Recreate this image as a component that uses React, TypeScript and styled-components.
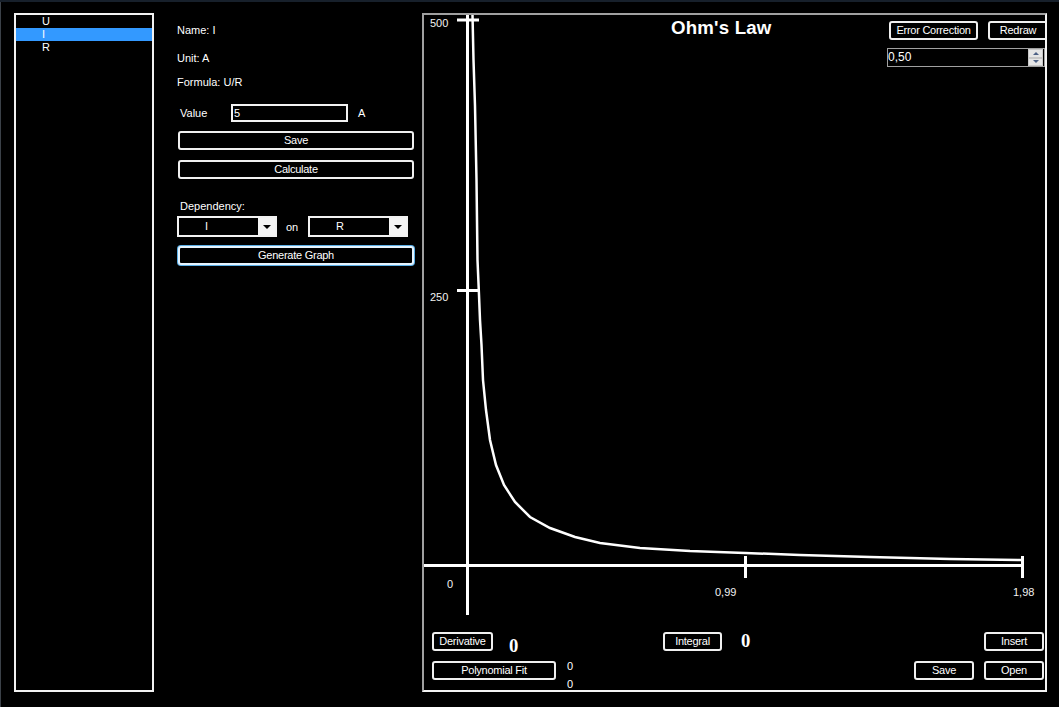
import React from "react";
import styled, { createGlobalStyle, css } from "styled-components";

const GlobalStyle = createGlobalStyle`
  html, body {
    margin: 0;
    padding: 0;
    background: #000;
  }
  body {
    font-family: "Liberation Sans", Arial, sans-serif;
  }
`;

const Window = styled.div`
  display: flex;
  align-items: flex-start;
  width: 1059px;
  height: 707px;
  background: #000;
  color: #fff;
  font-family: "Liberation Sans", Arial, sans-serif;
  font-size: 11px;
  overflow: hidden;
  box-shadow: inset 0 2px 0 #17202b, inset 1px 0 0 #3b4148;
`;

const ListBox = styled.ul`
  list-style: none;
  flex-shrink: 0;
  margin: 13px 0 0 14px;
  padding: 0;
  width: 140px;
  height: 679px;
  box-sizing: border-box;
  border: 2px solid #f2f2f2;
`;

const ListItem = styled.li<{ $selected?: boolean }>`
  height: 13px;
  line-height: 13px;
  padding-left: 26px;
  background: ${(p) => (p.$selected ? "#3399ff" : "transparent")};
`;

const Form = styled.div`
  display: flex;
  flex-direction: column;
  flex-shrink: 0;
  width: 237px;
  margin-left: 23px;
  padding-top: 23px;
`;

const InfoLabel = styled.div<{ $gap?: number }>`
  line-height: 14px;
  margin-top: ${(p) => p.$gap ?? 0}px;
`;

const ValueRow = styled.div`
  display: flex;
  align-items: center;
  height: 18px;
  margin-top: 15px;
  padding-left: 3px;
`;

const ValueLabel = styled.span`
  width: 51px;
`;

const TextInput = styled.div`
  width: 117px;
  height: 18px;
  box-sizing: border-box;
  border: 2px solid #f2f2f2;
  padding-left: 1px;
  line-height: 14px;
`;

const UnitLabel = styled.span`
  margin-left: 10px;
`;

const Button = styled.button<{ $w?: number; $focused?: boolean }>`
  flex-shrink: 0;
  width: ${(p) => (p.$w ? `${p.$w}px` : "100%")};
  height: 19px;
  box-sizing: border-box;
  padding: 0;
  background: #000;
  color: #fff;
  border: 2px solid #f0f0f0;
  border-radius: 3px;
  font-family: "Liberation Sans", Arial, sans-serif;
  font-size: 11px;
  letter-spacing: -0.25px;
  line-height: 15px;
  white-space: nowrap;
  ${(p) =>
    p.$focused &&
    css`
      border-color: #e6f4ff;
      box-shadow: 0 0 0 1px #5aaee6;
    `}
`;

const FormButton = styled(Button)<{ $gap: number }>`
  width: 236px;
  margin: ${(p) => p.$gap}px 0 0 1px;
`;

const DependencyLabel = styled.div`
  line-height: 14px;
  margin-top: 20px;
  padding-left: 3px;
`;

const ComboRow = styled.div`
  display: flex;
  align-items: center;
  margin-top: 3px;
`;

const Combo = styled.div`
  display: flex;
  width: 100px;
  height: 21px;
  box-sizing: border-box;
  border: 2px solid #f2f2f2;
  background: #000;
`;

const ComboText = styled.span`
  flex: 1;
  padding-left: 26px;
  line-height: 17px;
`;

const ComboArrow = styled.span`
  display: flex;
  align-items: center;
  justify-content: center;
  width: 17px;
  background: #f4f4f4;
  &::after {
    content: "";
    border-left: 4px solid transparent;
    border-right: 4px solid transparent;
    border-top: 4px solid #000;
  }
`;

const OnLabel = styled.span`
  width: 31px;
  padding-left: 9px;
  box-sizing: border-box;
`;

const GraphPanel = styled.div`
  position: relative;
  flex-shrink: 0;
  width: 625px;
  height: 679px;
  margin: 13px 0 0 8px;
  box-sizing: border-box;
  border: 2px solid;
  border-color: #a0a0a0 #f4f4f4 #f4f4f4 #a0a0a0;
  overflow: hidden;
`;

const Chart = styled.svg`
  position: absolute;
  inset: 0;
  width: 100%;
  height: 100%;
`;

const GraphLayer = styled.div`
  position: relative;
  display: flex;
  flex-direction: column;
  justify-content: space-between;
  height: 100%;
`;

const GraphHeader = styled.div`
  display: flex;
  align-items: flex-start;
`;

const Title = styled.h1`
  margin: 2px 0 0 247px;
  font-family: "Liberation Sans", Arial, sans-serif;
  font-size: 18.67px;
  font-weight: bold;
  line-height: 21px;
  letter-spacing: 0.2px;
`;

const HeaderTools = styled.div`
  display: flex;
  flex-direction: column;
  width: 158px;
  margin-left: auto;
  padding-top: 6px;
`;

const ToolRow = styled.div`
  display: flex;
  gap: 10px;
  padding-left: 2px;
`;

const Spinner = styled.div`
  display: flex;
  width: 158px;
  height: 19px;
  margin-top: 8px;
  box-sizing: border-box;
  border: 1px solid #a0a0a0;
`;

const SpinValue = styled.span`
  flex: 1;
  font-size: 12px;
  line-height: 17px;
`;

const SpinButtons = styled.div`
  display: flex;
  flex-direction: column;
  width: 15px;
  margin-right: 1px;
`;

const SpinHalf = styled.span<{ $down?: boolean }>`
  display: flex;
  flex: 1;
  align-items: center;
  justify-content: center;
  background: #e6e6e6;
  border: 1px solid #c8c8c8;
  &::after {
    content: "";
    border-left: 3px solid transparent;
    border-right: 3px solid transparent;
    ${(p) =>
      p.$down
        ? css`border-top: 3px solid #4d6185;`
        : css`border-bottom: 3px solid #4d6185;`}
  }
`;

const GraphFooter = styled.div`
  display: flex;
  flex-direction: column;
  gap: 10px;
  padding: 0 1px 10px 8px;
`;

const ResultRow = styled.div`
  display: grid;
  grid-template-columns: 61px 170px 59px 1fr 60px;
  height: 19px;
`;

const BigValue = styled.span<{ $left: number; $top: number }>`
  padding-left: ${(p) => p.$left}px;
  margin-top: ${(p) => p.$top}px;
  font-family: "Liberation Serif", "Times New Roman", serif;
  font-size: 18.67px;
  font-weight: bold;
  line-height: 19px;
`;

const FitRow = styled.div`
  display: flex;
  gap: 10px;
  height: 19px;
`;

const FitValues = styled.div`
  display: flex;
  flex-direction: column;
  margin: -4px auto 0 1px;
  line-height: 18px;
`;

const AxisText = styled.text`
  fill: #f2f2f2;
  font-family: "Liberation Sans", Arial, sans-serif;
  font-size: 11px;
`;

const curve: [number, number][] = [
  [472.5, 15],
  [473.5, 60],
  [475, 106],
  [476.5, 180],
  [477.5, 260],
  [479, 295],
  [480, 320],
  [481.5, 345],
  [483, 380],
  [486, 410],
  [490, 440],
  [496, 465],
  [504, 485],
  [515, 502],
  [530, 517],
  [550, 528],
  [575, 537],
  [600, 543],
  [640, 548],
  [690, 551],
  [745, 553],
  [800, 555],
  [870, 557],
  [950, 559],
  [1022, 560],
];

const OhmChart = () => (
  <Chart viewBox="424 15 621 675" preserveAspectRatio="none">
    <g stroke="#fff" strokeWidth={3} fill="none">
      <line x1={467.5} y1={15} x2={467.5} y2={615} />
      <line x1={424} y1={565.5} x2={1023} y2={565.5} />
      <line x1={457} y1={20} x2={479} y2={20} />
      <line x1={457} y1={290.5} x2={479} y2={290.5} />
      <line x1={745.5} y1={556} x2={745.5} y2={578} />
      <line x1={1022.5} y1={556} x2={1022.5} y2={578} />
      <polyline
        strokeWidth={2.5}
        points={curve.map(([x, y]) => `${x},${y}`).join(" ")}
      />
    </g>
    <AxisText x={430} y={27}>500</AxisText>
    <AxisText x={430} y={301}>250</AxisText>
    <AxisText x={447} y={588}>0</AxisText>
    <AxisText x={715} y={596}>0,99</AxisText>
    <AxisText x={1013} y={596}>1,98</AxisText>
  </Chart>
);

export default function App() {
  return (
    <>
      <GlobalStyle />
      <Window>
        <ListBox>
          <ListItem>U</ListItem>
          <ListItem $selected>I</ListItem>
          <ListItem>R</ListItem>
        </ListBox>

        <Form>
          <InfoLabel>Name: I</InfoLabel>
          <InfoLabel $gap={14}>Unit: A</InfoLabel>
          <InfoLabel $gap={10}>Formula: U/R</InfoLabel>
          <ValueRow>
            <ValueLabel>Value</ValueLabel>
            <TextInput>5</TextInput>
            <UnitLabel>A</UnitLabel>
          </ValueRow>
          <FormButton $gap={9}>Save</FormButton>
          <FormButton $gap={10}>Calculate</FormButton>
          <DependencyLabel>Dependency:</DependencyLabel>
          <ComboRow>
            <Combo>
              <ComboText>I</ComboText>
              <ComboArrow />
            </Combo>
            <OnLabel>on</OnLabel>
            <Combo>
              <ComboText>R</ComboText>
              <ComboArrow />
            </Combo>
          </ComboRow>
          <FormButton $gap={9} $focused>
            Generate Graph
          </FormButton>
        </Form>

        <GraphPanel>
          <OhmChart />
          <GraphLayer>
            <GraphHeader>
              <Title>Ohm's Law</Title>
              <HeaderTools>
                <ToolRow>
                  <Button $w={89}>Error Correction</Button>
                  <Button $w={60}>Redraw</Button>
                </ToolRow>
                <Spinner>
                  <SpinValue>0,50</SpinValue>
                  <SpinButtons>
                    <SpinHalf />
                    <SpinHalf $down />
                  </SpinButtons>
                </Spinner>
              </HeaderTools>
            </GraphHeader>

            <GraphFooter>
              <ResultRow>
                <Button>Derivative</Button>
                <BigValue $left={16} $top={4}>0</BigValue>
                <Button>Integral</Button>
                <BigValue $left={19} $top={-1}>0</BigValue>
                <Button>Insert</Button>
              </ResultRow>
              <FitRow>
                <Button $w={124}>Polynomial Fit</Button>
                <FitValues>
                  <span>0</span>
                  <span>0</span>
                </FitValues>
                <Button $w={60}>Save</Button>
                <Button $w={60}>Open</Button>
              </FitRow>
            </GraphFooter>
          </GraphLayer>
        </GraphPanel>
      </Window>
    </>
  );
}
